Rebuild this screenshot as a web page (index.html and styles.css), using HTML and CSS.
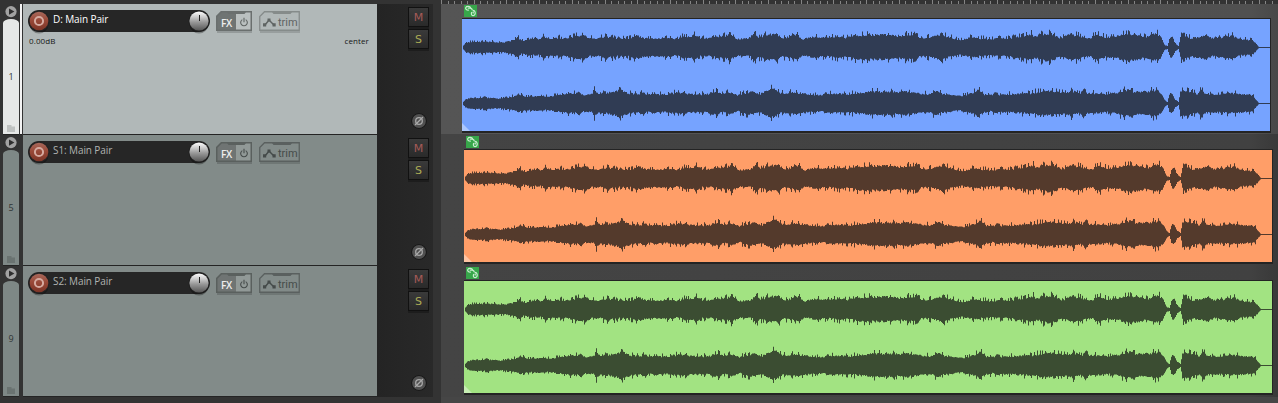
FILE: index.html
```html
<!DOCTYPE html>
<html lang="en">
<head>
<meta charset="utf-8">
<title>Multitrack session</title>
<link rel="stylesheet" href="styles.css">
</head>
<body>
<svg class="defs" width="0" height="0" aria-hidden="true">
  <defs>
    <linearGradient id="g-rec" x1="0" y1="0" x2="0" y2="1"><stop offset="0" stop-color="#a8695c"/><stop offset=".45" stop-color="#9a4938"/><stop offset="1" stop-color="#7c3426"/></linearGradient>
    <linearGradient id="g-knob" x1="0" y1="0" x2="0" y2="1"><stop offset="0" stop-color="#fff"/><stop offset=".3" stop-color="#c9c9c9"/><stop offset=".55" stop-color="#999"/><stop offset="1" stop-color="#555"/></linearGradient>
    <symbol id="rec" viewBox="0 0 22 24">
      <ellipse cx="11" cy="14" rx="9.5" ry="9.5" fill="#000" opacity=".3"/>
      <circle cx="11" cy="11" r="10.5" fill="#242222"/>
      <circle cx="11" cy="11" r="9.3" fill="url(#g-rec)"/>
      <circle cx="11" cy="11" r="4.1" fill="none" stroke="#d5aaa0" stroke-width="2"/>
    </symbol>
    <symbol id="knob" viewBox="0 0 22 24">
      <ellipse cx="11" cy="14" rx="9.5" ry="9.5" fill="#000" opacity=".3"/>
      <circle cx="11" cy="11" r="10.5" fill="#222"/>
      <circle cx="11" cy="11" r="9.6" fill="url(#g-knob)"/>
      <path d="M11.5 5v6" stroke="#222" stroke-width="1"/>
    </symbol>
    <symbol id="play" viewBox="0 0 12 12">
      <circle cx="6" cy="5.600" r="5.6" fill="#a2a2a2"/><path d="M4 2.500 9.400 5.600 4 8.800z" fill="#2e2e2e"/>
    </symbol>
    <symbol id="folder" viewBox="0 0 8 7"><path d="M0 0h4.5v1.5H8V7H0z" fill="currentColor"/></symbol>
    <symbol id="fxbox" viewBox="0 0 36 22">
      <path d="M1 20h35v2H1z" fill="#000" opacity=".16"/>
      <path d="M5 0H20v20H0V5z" fill="#6f7473"/><path d="M20 0h16v20H20z" fill="#fff" opacity=".12"/>
      <path d="M.75 19.250V5.500L5.500.750H35.250v18.500z" fill="none" stroke="currentColor" stroke-width="1.5"/>
      <path d="M11 1h19l-1.500 2h-16z" fill="currentColor"/>
    </symbol>
    <symbol id="trimbox" viewBox="0 0 41 22">
      <path d="M1 20h40v2H1z" fill="#000" opacity=".14"/>
      <path d="M.75 19.250V5.500L5.500.750H40.250v18.500z" fill="none" stroke="currentColor" stroke-width="1.3"/>
      <path d="M13 1h20l-1.500 2H14.500z" fill="currentColor"/>
    </symbol>
    <symbol id="power" viewBox="0 0 8 10"><path d="M2.3 2.6a3.3 3.3 0 1 0 3.4 0M4 .8v4.4" fill="none" stroke="currentColor" stroke-width="1.1"/></symbol>
    <symbol id="env" viewBox="0 0 13 9"><path d="M2 7 6 2l5 5" fill="none" stroke="currentColor" stroke-width="1.5"/><path d="M0 5.300h3.200v3.200H0zM4.500.500h3v3h-3zM9.500 5.300h3.200v3.200H9.500z" fill="currentColor"/></symbol>
    <symbol id="phase" viewBox="0 0 16 16">
      <circle cx="8" cy="8" r="7.8" fill="#161616"/><circle cx="8" cy="8" r="6.9" fill="#505050"/>
      <circle cx="8" cy="8" r="3.3" fill="none" stroke="#aaa" stroke-width="1.3"/><path d="M4 12 12 4" stroke="#aaa" stroke-width="1.2"/>
    </symbol>
    <symbol id="link" viewBox="0 0 13 12">
      <path d="M0 0h13v12H0z" fill="#37a64a"/>
      <path d="M6.800 2.700C5.800 1 2.600.900 1.800 2.500c-.7 1.600 1 2.900 3 2.600M3.800 3.100h2.400c1.300.2 2 1 2.100 2M7.800 7C7 8.300 7.300 10.600 9 10.700c1.900.1 2.500-1.900 2.100-3.500C10.800 6 9.800 5.200 8.700 5.300M9.200 6.500v1.900" fill="none" stroke="#c9ecce" stroke-width="1.200"/>
    </symbol>
  </defs>
</svg>

<main class="session">
  <section class="panel-list">
    <article class="track selected">
      <div class="gutter"><svg class="play"><use href="#play"/></svg><div class="index"><span>1</span><svg class="folder"><use href="#folder"/></svg></div></div>
      <div class="strip"></div>
      <div class="panel">
        <div class="head">
          <div class="name"><svg class="round"><use href="#rec"/></svg><span>D: Main Pair</span><svg class="round"><use href="#knob"/></svg></div>
          <div class="fx"><svg class="frame"><use href="#fxbox"/></svg><b>FX</b><svg class="power"><use href="#power"/></svg></div>
          <div class="trim"><svg class="frame"><use href="#trimbox"/></svg><svg class="env"><use href="#env"/></svg><span>trim</span></div>
        </div>
        <div class="values"><span>0.00dB</span><span>center</span></div>
      </div>
      <div class="controls"><button class="mute">M</button><button class="solo">S</button><svg class="phase"><use href="#phase"/></svg></div>
    </article>
    <article class="track">
      <div class="gutter"><svg class="play"><use href="#play"/></svg><div class="index"><span>5</span><svg class="folder"><use href="#folder"/></svg></div></div>
      <div class="strip"></div>
      <div class="panel">
        <div class="head">
          <div class="name"><svg class="round"><use href="#rec"/></svg><span>S1: Main Pair</span><svg class="round"><use href="#knob"/></svg></div>
          <div class="fx"><svg class="frame"><use href="#fxbox"/></svg><b>FX</b><svg class="power"><use href="#power"/></svg></div>
          <div class="trim"><svg class="frame"><use href="#trimbox"/></svg><svg class="env"><use href="#env"/></svg><span>trim</span></div>
        </div>
      </div>
      <div class="controls"><button class="mute">M</button><button class="solo">S</button><svg class="phase"><use href="#phase"/></svg></div>
    </article>
    <article class="track">
      <div class="gutter"><svg class="play"><use href="#play"/></svg><div class="index"><span>9</span><svg class="folder"><use href="#folder"/></svg></div></div>
      <div class="strip"></div>
      <div class="panel">
        <div class="head">
          <div class="name"><svg class="round"><use href="#rec"/></svg><span>S2: Main Pair</span><svg class="round"><use href="#knob"/></svg></div>
          <div class="fx"><svg class="frame"><use href="#fxbox"/></svg><b>FX</b><svg class="power"><use href="#power"/></svg></div>
          <div class="trim"><svg class="frame"><use href="#trimbox"/></svg><svg class="env"><use href="#env"/></svg><span>trim</span></div>
        </div>
      </div>
      <div class="controls"><button class="mute">M</button><button class="solo">S</button><svg class="phase"><use href="#phase"/></svg></div>
    </article>
  </section>

  <section class="arrange">
    <svg class="ruler" viewBox="0 0 837 4"></svg>
    <div class="lane active"><svg class="link"><use href="#link"/></svg><div class="item blue"><svg class="wave" viewBox="0 0 808 112"></svg></div></div>
    <div class="lane"><svg class="link"><use href="#link"/></svg><div class="item orange"><svg class="wave" viewBox="0 0 808 112"></svg></div></div>
    <div class="lane"><svg class="link"><use href="#link"/></svg><div class="item green"><svg class="wave" viewBox="0 0 808 112"></svg></div></div>
  </section>
</main>
<script src="wave.js"></script>
</body>
</html>
```

FILE: styles.css
```css
* { box-sizing: border-box; }
body { margin: 0; width: 1278px; height: 403px; overflow: hidden; background: #333; font-family: "Open Sans", sans-serif; }
svg { display: block; flex: none; }
.defs { position: absolute; }
.session { display: flex; height: 403px; }

.panel-list { width: 441px; padding: 4px 8px 0 3px; }
.track { display: grid; grid-template-columns: 16px 4px 354px 56px; height: 131px; --face: #828b89; --index: #7e8886; --line: #5a605e; --trim: #5a605f; --ink: #454b4a; }
.track.selected { --face: #b1b8b8; --index: #e6e8e7; --line: #6a6f6e; --trim: #858b8a; --ink: #5f6463; }
.gutter { display: flex; flex-direction: column; align-items: center; padding-top: 2px; border-bottom: 1px solid #242424; }
.play { width: 12px; height: 12px; margin-bottom: 1px; }
.index { flex: 1; width: 16px; display: flex; flex-direction: column; align-items: center; justify-content: space-between; padding: 50px 0 2px; background: var(--index); border-radius: 8px 8px 0 0 / 4px 4px 0 0; color: #303535; font-size: 9px; line-height: 16px; }
.folder { width: 8px; height: 7px; color: #6a7371; }
.selected .folder { color: #bfc2c1; }
.selected .strip { margin: 0 1px; background: #f4f4f4; border-bottom: 1px solid #242424; }
.panel { background: var(--face); border-bottom: 1px solid #242424; }
.head { display: flex; align-items: flex-start; padding: 6px 0 0 5px; }
.name { display: flex; width: 182px; height: 22px; margin-right: 6px; background: #262626; border-radius: 11px; color: #b0b3b1; font-size: 10px; line-height: 19px; }
.name span { flex: 1; padding-left: 3px; white-space: nowrap; letter-spacing: -.1px; }
.selected .name { color: #fff; }
.round { width: 22px; height: 24px; }
.fx, .trim { position: relative; display: flex; align-items: center; height: 20px; margin-top: 1px; color: var(--ink); }
.frame { position: absolute; inset: 0; height: 22px; }
.fx { width: 36px; margin-right: 7px; }
.fx .frame { width: 36px; color: var(--line); }
.fx b { position: relative; width: 20px; padding: 3px 0 0 1px; text-align: center; color: #eee; font: 600 10px/18px "Open Sans", sans-serif; letter-spacing: -.4px; }
.power { position: relative; width: 8px; height: 10px; margin: 2px 0 0 4px; }
.trim { width: 41px; padding: 3px 0 0 4px; font: 11px/17px Roboto, sans-serif; }
.trim .frame { width: 41px; color: var(--trim); }
.env { width: 13px; height: 9px; margin-right: 2px; }
.values { display: flex; justify-content: space-between; padding: 0 8px 0 6px; margin-top: 3px; color: #151717; font-size: 8px; line-height: 12px; letter-spacing: .1px; }
.controls { display: flex; flex-direction: column; align-items: flex-end; padding: 3px 4px 6px 0; background: linear-gradient(90deg, #242424, #292929); }
.controls button { width: 21px; height: 20px; margin: 0 0 2px; padding: 1px 0 0; border: 1px solid #111; background: linear-gradient(#3a3a3a, #2a2a2a); box-shadow: 0 2px 0 #1d1d1d; font: 11px/17px "DejaVu Sans", sans-serif; }
.controls .mute { color: #a55b57; }
.controls .solo { color: #acab55; }
.phase { width: 16px; height: 16px; margin: auto 2px 0 0; }

.arrange { width: 837px; background: #464646; }
.ruler { width: 837px; height: 4px; background: #333; }
.lane { height: 131px; padding: 1px 0 0 23px; background: linear-gradient(90deg, #444 0, #414141 810px, #393939 837px); }
.lane.active { height: 130px; padding-left: 21px; background: linear-gradient(90deg, #555 0, #505050 810px, #484848 837px); }
.lane.active + .lane { height: 132px; padding-top: 2px; }
.link { width: 13px; height: 12px; margin-left: 2px; }
.item { position: relative; width: 809px; height: 115px; margin-top: 1px; border: 1px solid #242424; border-left: 0; border-bottom-width: 2px; }
.item::after { content: ""; position: absolute; left: 0; bottom: 0; width: 8px; height: 8px; background: rgba(255,255,255,.4); clip-path: polygon(0 0, 100% 100%, 0 100%); }
.wave { width: 808px; height: 112px; }
.blue { background: #76a3ff; color: #303c54; }
.orange { background: #ff9e68; color: #543a2c; }
.green { background: #a2e382; color: #3b4d32; }
```

FILE: wave.js
```js
// Peak envelopes as x,height pairs; x is measured from the item's left edge.
const UPPER = [1,1,4,5,8,6,28,6,41,5,45,6,50,7,56,11,60,7,68,9,78,8,81,13,85,10,103,10,112,12,122,14,128,10,136,10,144,12,153,10,166,10,175,13,183,10,198,10,203,11,213,9,222,12,233,13,238,10,248,10,268,14,276,9,288,10,290,11,292,18,295,11,306,14,313,15,321,10,335,14,341,9,353,12,363,10,379,12,383,10,391,13,403,14,418,14,430,14,436,12,446,14,454,13,458,10,468,11,479,14,488,11,498,8,509,11,518,10,528,9,538,10,548,10,558,12,569,15,573,12,581,15,591,15,598,10,609,15,618,12,628,10,635,15,643,11,653,12,663,15,674,15,681,11,693,15,699,13,701,6,703,2,706,1,707,8,708,11,711,11,713,4,715,2,717,1,718,10,720,15,728,10,738,12,744,14,750,10,758,11,770,13,778,9,791,8,794,3,797,0,808,0];
const LOWER = [1,1,4,4,8,6,28,6,38,5,50,7,57,9,68,7,80,9,83,7,90,8,105,11,115,11,117,13,121,9,130,10,132,16,135,11,144,11,157,15,168,11,188,10,205,10,216,12,232,10,245,10,253,13,260,10,268,12,276,9,290,13,298,10,307,16,312,16,318,11,332,12,346,10,358,9,370,11,386,10,398,12,408,13,424,13,436,12,442,14,455,11,468,10,474,14,481,10,498,8,507,10,516,15,522,10,530,9,546,10,560,11,568,11,578,13,588,14,602,12,610,14,618,11,622,17,625,11,632,11,644,10,656,12,666,15,672,13,684,13,695,15,700,10,702,5,704,2,706,1,707,8,709,12,711,10,713,4,715,2,717,1,718,10,720,15,728,13,736,10,739,16,743,11,752,10,772,11,782,10,791,9,794,4,797,0,808,0];

function heightAt(table, x) {
  for (let i = 2; i < table.length; i += 2) {
    if (x <= table[i]) {
      const t = (x - table[i - 2]) / (table[i] - table[i - 2]);
      return table[i - 1] + t * (table[i + 1] - table[i - 1]);
    }
  }
  return 0;
}

// Small seeded generator, so every clip shows the same recording.
function generator(seed) {
  return () => {
    seed = (seed + 0x6d2b79f5) | 0;
    let t = Math.imul(seed ^ (seed >>> 15), 1 | seed);
    t = (t + Math.imul(t ^ (t >>> 7), 61 | t)) ^ t;
    return ((t ^ (t >>> 14)) >>> 0) / 4294967296;
  };
}

// One-pixel columns: a steady body with sparse taller peaks.
function channel(table, mid, seed) {
  const rand = generator(seed);
  let path = "";
  for (let x = 1; x < 808; x++) {
    const h = heightAt(table, x + 0.5);
    const peak = rand() < 0.22 ? 0.3 : 0;
    const top = h * (0.78 + 0.16 * rand() + peak * (0.5 + 0.5 * rand()));
    const low = h * (0.74 + 0.16 * rand() + peak * (0.3 + 0.8 * rand()));
    const y = (mid - 0.5 - top).toFixed(1);
    path += `M${x} ${y}h1V${(mid + 0.5 + low).toFixed(1)}h-1z`;
  }
  return path;
}

const wavePath = channel(UPPER, 28.5, 11) + channel(LOWER, 84.5, 47);
document.querySelectorAll(".wave").forEach(svg => {
  svg.innerHTML = `<path d="${wavePath}" fill="currentColor"/>`;
});

let ticks = "";
for (let i = 0; i < 128; i++) {
  const x = Math.round(i * 6.54) + 0.5;
  ticks += `M${x} ${i % 5 ? 1 : 0}V4`;
}
document.querySelector(".ruler").innerHTML = `<path d="${ticks}" stroke="#858585"/>`;
```
